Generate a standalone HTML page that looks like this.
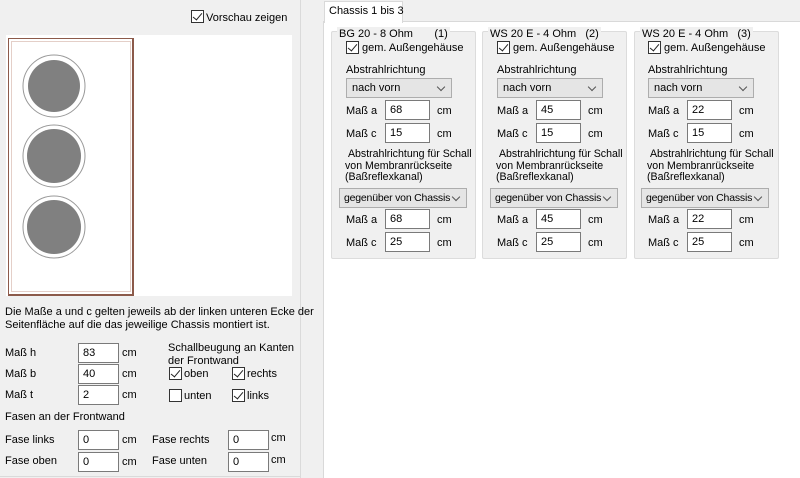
<!DOCTYPE html>
<html><head><meta charset="utf-8"><style>
*{margin:0;padding:0;box-sizing:border-box}
body{width:800px;height:478px;overflow:hidden;background:#f0f0f0;font-family:"Liberation Sans",sans-serif;font-size:11px;color:#000;position:relative}
.a{position:absolute;white-space:nowrap;line-height:14px}
.in{position:absolute;background:#fff;border:1px solid #7a7a7a;height:20px;padding:2px 0 0 4px;line-height:14px}
.cb{position:absolute;width:13px;height:13px;border:1px solid #333;background:#fff}
.cb.c::after{content:"";position:absolute;left:3px;top:0px;width:4px;height:8px;border:solid #222;border-width:0 1.3px 1.3px 0;transform:rotate(40deg)}
.combo{position:absolute;background:#e5e5e5;border:1px solid #adadad;height:20px;padding:2px 0 0 5px;line-height:14px;white-space:nowrap}
.combo::after{content:"";position:absolute;right:7px;top:5px;width:5px;height:5px;border:solid #555;border-width:0 1px 1px 0;transform:rotate(45deg)}
.combo.w{padding-left:4px;font-size:10.5px;letter-spacing:-0.2px}
.grp{position:absolute;top:31px;width:145px;height:228px;border:1px solid #dcdcdc;background:#f0f0f0;border-radius:2px}
.grp .t{position:absolute;top:-5px;left:5px;background:#f0f0f0;padding:0 2px;line-height:14px;white-space:nowrap}
.s{font-size:10.6px}
</style></head><body>
<div style="position:absolute;left:300px;top:0;width:1px;height:478px;background:#dadada"></div>
<div style="position:absolute;left:0;top:476px;width:300px;height:1px;background:#dadada"></div>
<div class="cb c" style="left:191px;top:10px"></div>
<div class="a" style="left:206px;top:11px">Vorschau zeigen</div>
<div style="position:absolute;left:6px;top:35px;width:286px;height:261px;background:#fff"></div>
<div style="position:absolute;left:8px;top:38px;width:126px;height:258px;border:1px solid #8c5a4a;border-right-width:2px;border-bottom-width:2px;background:#fff"></div>
<div style="position:absolute;left:11px;top:41px;width:120px;height:251px;border:1px solid #e4cfc8"></div>
<svg style="position:absolute;left:0;top:0" width="140" height="300">
<g fill="none" stroke="#999" stroke-width="1"><circle cx="54" cy="86" r="31"/><circle cx="54" cy="156" r="31"/><circle cx="54" cy="227" r="31"/></g>
<g fill="#808080"><circle cx="54" cy="86" r="26"/><circle cx="54" cy="156" r="27"/><circle cx="54" cy="227" r="27"/></g>
</svg>
<div class="a" style="left:5px;top:305px">Die Maße a und c gelten jeweils ab der linken unteren Ecke der</div>
<div class="a" style="left:5px;top:318px">Seitenfläche auf die das jeweilige Chassis montiert ist.</div>
<div class="a" style="left:5px;top:346px">Maß h</div><div class="in" style="left:78px;top:343px;width:41px">83</div><div class="a" style="left:122px;top:346px">cm</div>
<div class="a" style="left:5px;top:367px">Maß b</div><div class="in" style="left:78px;top:364px;width:41px">40</div><div class="a" style="left:122px;top:367px">cm</div>
<div class="a" style="left:5px;top:388px">Maß t</div><div class="in" style="left:78px;top:385px;width:41px">2</div><div class="a" style="left:122px;top:388px">cm</div>
<div class="a" style="left:168px;top:341px">Schallbeugung an Kanten</div>
<div class="a" style="left:168px;top:354px">der Frontwand</div>
<div class="cb c" style="left:169px;top:367px"></div><div class="a" style="left:184px;top:367px">oben</div>
<div class="cb c" style="left:232px;top:367px"></div><div class="a" style="left:247px;top:367px">rechts</div>
<div class="cb" style="left:169px;top:389px"></div><div class="a" style="left:184px;top:389px">unten</div>
<div class="cb c" style="left:232px;top:389px"></div><div class="a" style="left:247px;top:389px">links</div>
<div class="a" style="left:5px;top:410px">Fasen an der Frontwand</div>
<div class="a" style="left:5px;top:433px">Fase links</div><div class="in" style="left:78px;top:430px;width:41px">0</div><div class="a" style="left:122px;top:433px">cm</div>
<div class="a" style="left:152px;top:433px">Fase rechts</div><div class="in" style="left:228px;top:430px;width:41px">0</div><div class="a" style="left:271px;top:431px">cm</div>
<div class="a" style="left:5px;top:454px">Fase oben</div><div class="in" style="left:78px;top:452px;width:41px">0</div><div class="a" style="left:122px;top:455px">cm</div>
<div class="a" style="left:152px;top:454px">Fase unten</div><div class="in" style="left:228px;top:452px;width:41px">0</div><div class="a" style="left:271px;top:453px">cm</div>
<div style="position:absolute;left:323px;top:21px;width:477px;height:457px;background:#fff;border-left:1px solid #d9d9d9;border-top:1px solid #d9d9d9"></div>
<div style="position:absolute;left:324px;top:1px;width:79px;height:22px;background:#fff;border:1px solid #d9d9d9;border-bottom:none"></div>
<div class="a" style="left:329px;top:4px">Chassis 1 bis 3</div>

<div class="grp" style="left:331px"><div class="t">BG 20 - 8 Ohm&nbsp;&nbsp;&nbsp;&nbsp;&nbsp;&nbsp;&nbsp;(1)</div></div>
<div class="grp" style="left:482px"><div class="t">WS 20 E - 4 Ohm&nbsp;&nbsp;&nbsp;(2)</div></div>
<div class="grp" style="left:634px"><div class="t">WS 20 E - 4 Ohm&nbsp;&nbsp;&nbsp;(3)</div></div>

<div style="position:absolute;left:0;top:0">
<div class="cb c" style="left:346px;top:41px"></div><div class="a" style="left:362px;top:41px">gem. Außengehäuse</div>
<div class="a" style="left:346px;top:63px">Abstrahlrichtung</div>
<div class="combo" style="left:346px;top:78px;width:106px">nach vorn</div>
<div class="a" style="left:346px;top:104px">Maß a</div><div class="in" style="left:385px;top:100px;width:45px">68</div><div class="a" style="left:437px;top:104px">cm</div>
<div class="a" style="left:346px;top:127px">Maß c</div><div class="in" style="left:385px;top:123px;width:45px">15</div><div class="a" style="left:437px;top:127px">cm</div>
<div class="a s" style="left:345px;top:149px;line-height:11.5px">&nbsp;Abstrahlrichtung für Schall<br>von Membranrückseite<br>(Baßreflexkanal)</div>
<div class="combo w" style="left:339px;top:188px;width:128px">gegenüber von Chassis</div>
<div class="a" style="left:346px;top:213px">Maß a</div><div class="in" style="left:385px;top:209px;width:45px">68</div><div class="a" style="left:437px;top:213px">cm</div>
<div class="a" style="left:346px;top:236px">Maß c</div><div class="in" style="left:385px;top:232px;width:45px">25</div><div class="a" style="left:437px;top:236px">cm</div>
</div>
<div style="position:absolute;left:151px;top:0">
<div class="cb c" style="left:346px;top:41px"></div><div class="a" style="left:362px;top:41px">gem. Außengehäuse</div>
<div class="a" style="left:346px;top:63px">Abstrahlrichtung</div>
<div class="combo" style="left:346px;top:78px;width:106px">nach vorn</div>
<div class="a" style="left:346px;top:104px">Maß a</div><div class="in" style="left:385px;top:100px;width:45px">45</div><div class="a" style="left:437px;top:104px">cm</div>
<div class="a" style="left:346px;top:127px">Maß c</div><div class="in" style="left:385px;top:123px;width:45px">15</div><div class="a" style="left:437px;top:127px">cm</div>
<div class="a s" style="left:345px;top:149px;line-height:11.5px">&nbsp;Abstrahlrichtung für Schall<br>von Membranrückseite<br>(Baßreflexkanal)</div>
<div class="combo w" style="left:339px;top:188px;width:128px">gegenüber von Chassis</div>
<div class="a" style="left:346px;top:213px">Maß a</div><div class="in" style="left:385px;top:209px;width:45px">45</div><div class="a" style="left:437px;top:213px">cm</div>
<div class="a" style="left:346px;top:236px">Maß c</div><div class="in" style="left:385px;top:232px;width:45px">25</div><div class="a" style="left:437px;top:236px">cm</div>
</div>
<div style="position:absolute;left:302px;top:0">
<div class="cb c" style="left:346px;top:41px"></div><div class="a" style="left:362px;top:41px">gem. Außengehäuse</div>
<div class="a" style="left:346px;top:63px">Abstrahlrichtung</div>
<div class="combo" style="left:346px;top:78px;width:106px">nach vorn</div>
<div class="a" style="left:346px;top:104px">Maß a</div><div class="in" style="left:385px;top:100px;width:45px">22</div><div class="a" style="left:437px;top:104px">cm</div>
<div class="a" style="left:346px;top:127px">Maß c</div><div class="in" style="left:385px;top:123px;width:45px">15</div><div class="a" style="left:437px;top:127px">cm</div>
<div class="a s" style="left:345px;top:149px;line-height:11.5px">&nbsp;Abstrahlrichtung für Schall<br>von Membranrückseite<br>(Baßreflexkanal)</div>
<div class="combo w" style="left:339px;top:188px;width:128px">gegenüber von Chassis</div>
<div class="a" style="left:346px;top:213px">Maß a</div><div class="in" style="left:385px;top:209px;width:45px">22</div><div class="a" style="left:437px;top:213px">cm</div>
<div class="a" style="left:346px;top:236px">Maß c</div><div class="in" style="left:385px;top:232px;width:45px">25</div><div class="a" style="left:437px;top:236px">cm</div>
</div>
</body></html>
